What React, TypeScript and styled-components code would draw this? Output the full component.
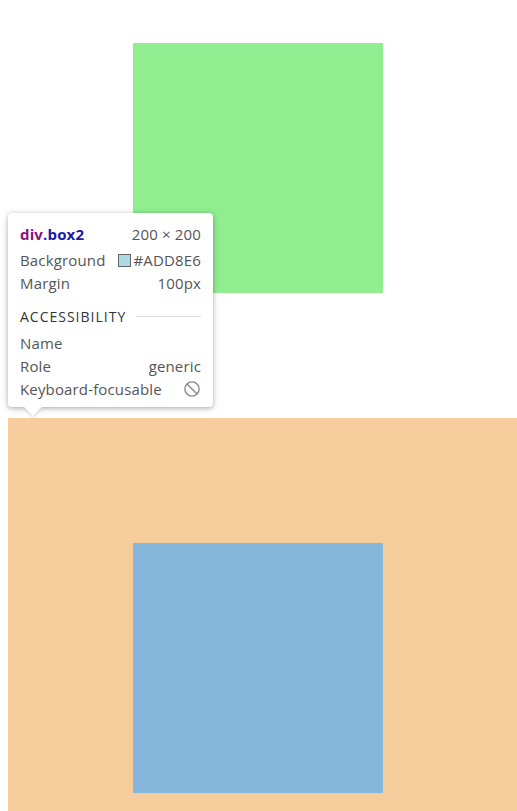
import React from 'react';
import styled, { createGlobalStyle } from 'styled-components';

const Global = createGlobalStyle`
  html, body {
    margin: 0;
    padding: 0;
    background: #ffffff;
    overflow: hidden;
  }
  body {
    font-family: 'Open Sans', 'Noto Sans', sans-serif;
  }
`;

const Page = styled.div`
  position: relative;
  width: 517px;
  height: 811px;
  overflow: hidden;
`;

const Box = styled.div<{ $color: string }>`
  width: 250px;
  height: 250px;
  background: ${(p) => p.$color};
`;

const GreenBox = styled(Box)`
  margin: 43px 0 0 133px;
`;

const MarginArea = styled.div`
  margin: 125px 0 0 8px;
  padding: 125px;
  background: #f7cd9e;
`;

const Tooltip = styled.div`
  position: absolute;
  left: 8px;
  top: 213px;
  width: 205px;
  box-sizing: border-box;
  padding: 9.5px 12px 6.5px;
  background: #ffffff;
  border-radius: 4px;
  box-shadow: 0 1px 4px rgba(0, 0, 0, 0.25), 0 2px 8px rgba(0, 0, 0, 0.12);
  font-size: 15px;
  letter-spacing: 0.15px;
  color: #555;

  &::after {
    content: '';
    position: absolute;
    left: 16px;
    bottom: -9px;
    width: 0;
    height: 0;
    border-left: 9px solid transparent;
    border-right: 9px solid transparent;
    border-top: 9px solid #ffffff;
    filter: drop-shadow(0 2px 1px rgba(0, 0, 0, 0.12));
  }
`;

const Row = styled.div<{ $gap?: number }>`
  display: flex;
  justify-content: space-between;
  align-items: center;
  height: 23px;
  margin-bottom: ${(p) => p.$gap ?? 0}px;
  white-space: nowrap;
`;

const Tag = styled.span`
  font-weight: 700;
  color: #881280;

  span {
    color: #1a1aa6;
  }
`;

const Value = styled.span`
  color: #555;
  display: flex;
  align-items: center;
  gap: 3px;
`;

const Swatch = styled.span<{ $color: string }>`
  display: inline-block;
  width: 11px;
  height: 11px;
  border: 1px solid #666;
  background: ${(p) => p.$color};
`;

const Section = styled.div`
  display: flex;
  align-items: center;
  gap: 10px;
  margin: 10px 0 4px;
  height: 23px;
  font-size: 14px;
  letter-spacing: 1px;
  color: #333;

  &::after {
    content: '';
    flex: 1;
    height: 1px;
    background: #ddd;
  }
`;

const BanIcon = () => (
  <svg width="18" height="18" viewBox="0 0 24 24" fill="none" stroke="#888" strokeWidth="1.8">
    <circle cx="12" cy="12" r="9.5" />
    <path d="M5.3 5.3l13.4 13.4" />
  </svg>
);

export default function App() {
  return (
    <Page>
      <Global />
      <GreenBox $color="#90ee90" />
      <MarginArea>
        <Box $color="#85b7dd" />
      </MarginArea>
      <Tooltip>
        <Row $gap={3}>
          <Tag>
            div<span>.box2</span>
          </Tag>
          <Value>200 × 200</Value>
        </Row>
        <Row>
          Background
          <Value>
            <Swatch $color="#add8e6" />
            #ADD8E6
          </Value>
        </Row>
        <Row>
          Margin
          <Value>100px</Value>
        </Row>
        <Section>ACCESSIBILITY</Section>
        <Row>Name</Row>
        <Row>
          Role
          <Value>generic</Value>
        </Row>
        <Row>
          Keyboard-focusable
          <Value>
            <BanIcon />
          </Value>
        </Row>
      </Tooltip>
    </Page>
  );
}
